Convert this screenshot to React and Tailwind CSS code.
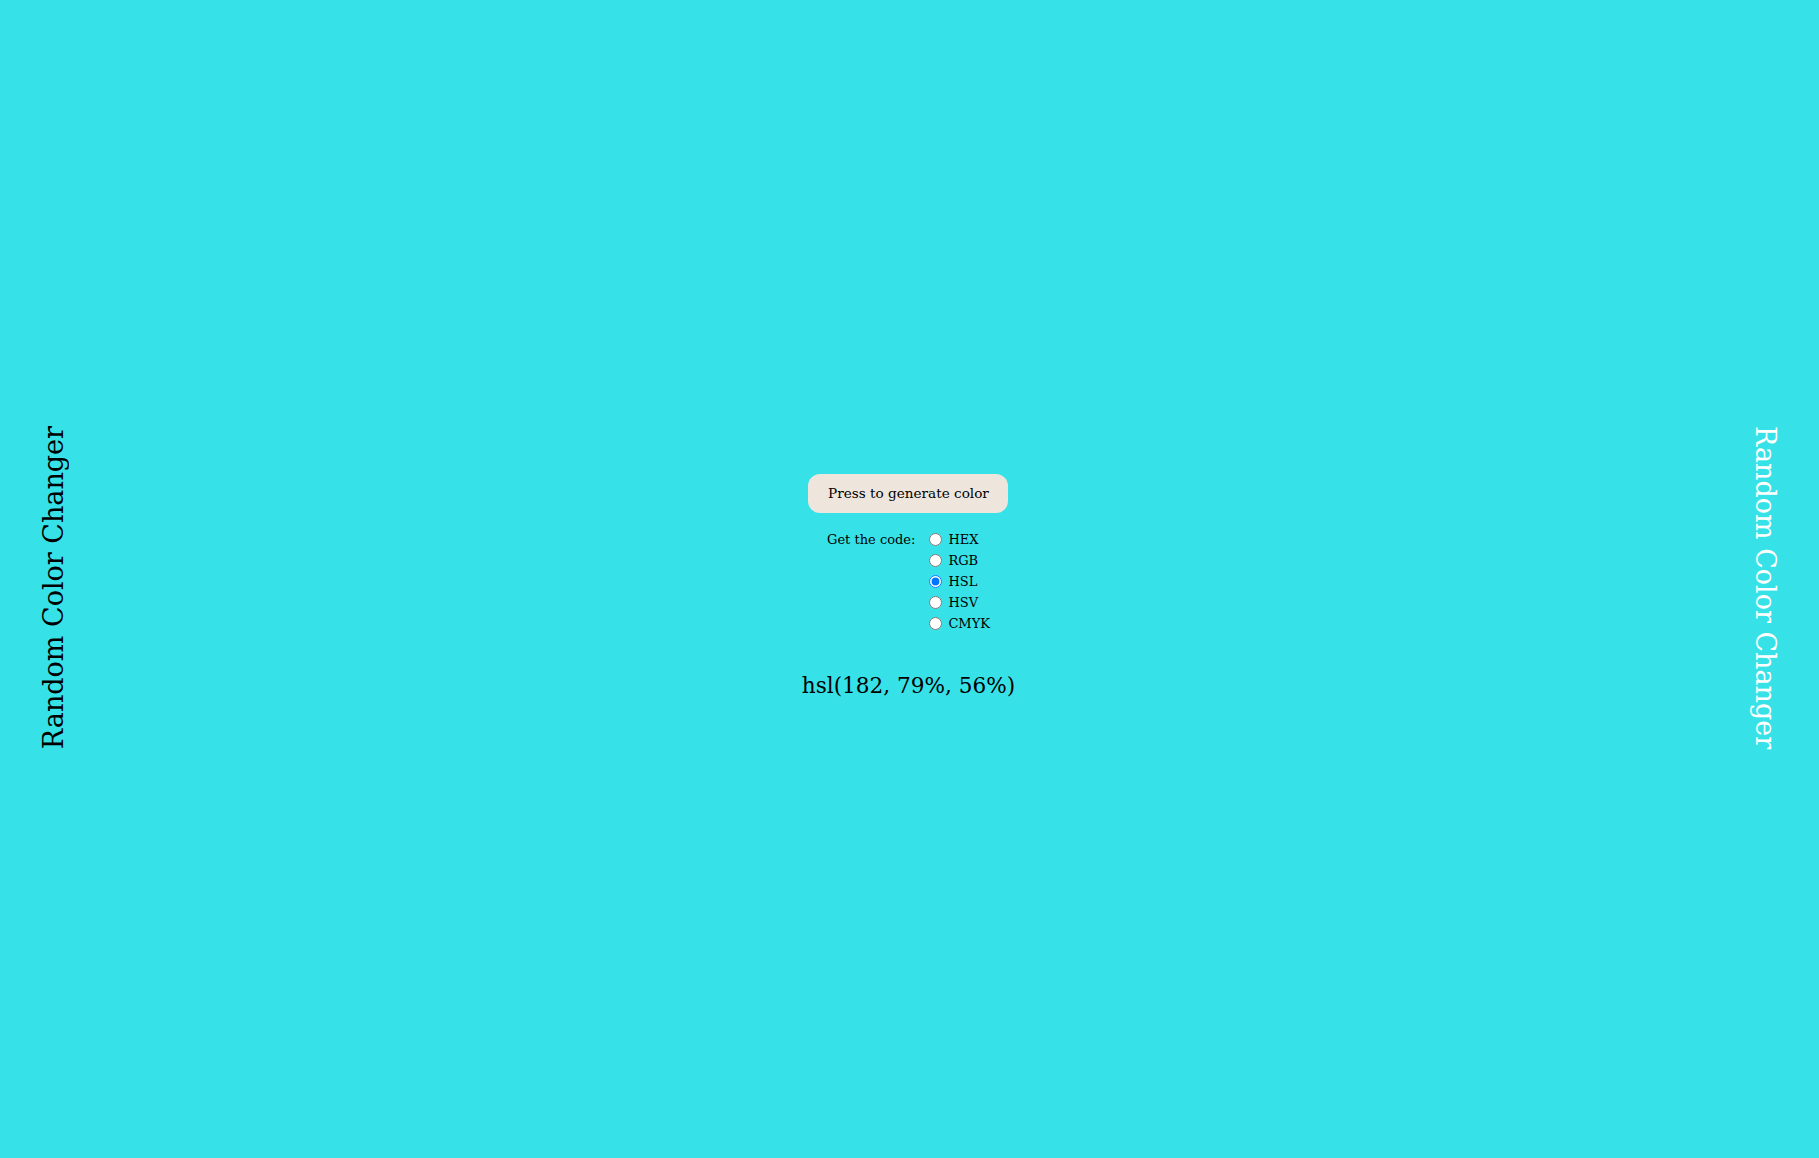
import { useState } from "react";

const serif = { fontFamily: '"DejaVu Serif", "Liberation Serif", serif' };

export default function App() {
  const [format, setFormat] = useState("hsl");
  const formats = [
    ["hex", "HEX"],
    ["rgb", "RGB"],
    ["hsl", "HSL"],
    ["hsv", "HSV"],
    ["cmyk", "CMYK"],
  ];

  return (
    <div
      className="min-h-screen w-full bg-[#36e2e7] flex items-center justify-between pl-[40px] pr-[40px]"
      style={serif}
    >
      {/* left title */}
      <h1 className="mt-[18px] [writing-mode:vertical-rl] rotate-180 text-[27px] leading-none text-black m-0 font-normal">
        Random Color Changer
      </h1>

      {/* center */}
      <div className="flex flex-col items-center pt-[18px] mr-[2px]">
        <button
          type="button"
          className="h-[39px] w-[200px] rounded-[12px] bg-[#eee6dc] text-[13.6px] text-black"
        >
          Press to generate color
        </button>

        <div className="mt-[16px] flex items-start gap-[14px] text-[13px] text-black">
          <span className="leading-[21px]">Get the code:</span>
          <div className="flex flex-col">
            {formats.map(([k, label]) => (
              <label key={k} className="flex items-center gap-[6px] h-[21px]">
                <input
                  type="radio"
                  name="fmt"
                  checked={format === k}
                  onChange={() => setFormat(k)}
                  className="m-0 w-[13px] h-[13px]"
                />
                <span>{label}</span>
              </label>
            ))}
          </div>
        </div>

        <p className="mt-[36px] text-[21.6px] text-black">hsl(182, 79%, 56%)</p>
      </div>

      {/* right title */}
      <h1 className="mt-[18px] [writing-mode:vertical-rl] text-[27px] leading-none text-white m-0 font-normal">
        Random Color Changer
      </h1>
    </div>
  );
}
